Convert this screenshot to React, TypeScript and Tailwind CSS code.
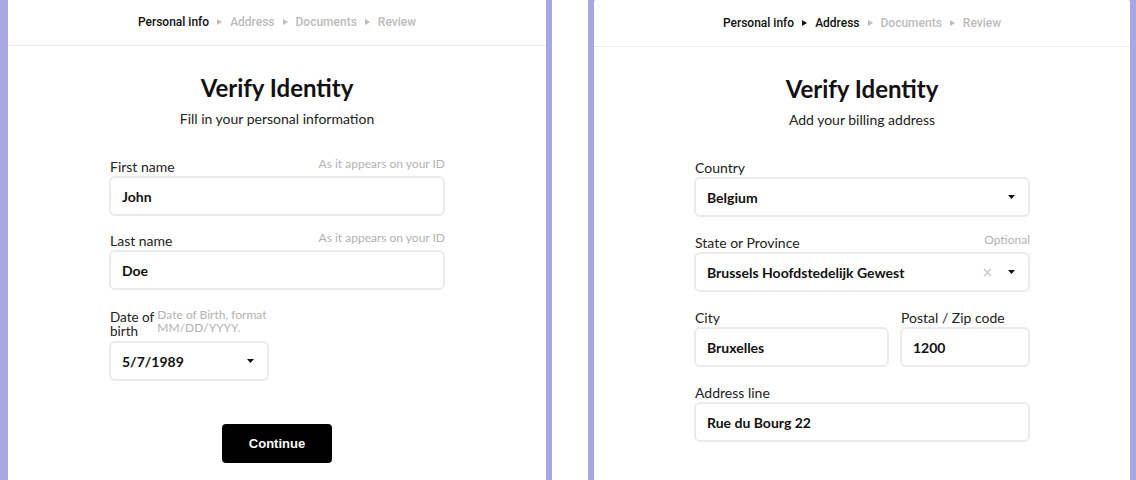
import React from "react";

const body = { fontFamily: "Lato, 'Noto Sans', sans-serif" };

function Caret() {
  return (
    <svg width="7" height="4" viewBox="0 0 7 4" className="shrink-0">
      <path d="M0 0h7L3.5 4z" fill="#111" />
    </svg>
  );
}

function Cross() {
  return (
    <svg width="9" height="9" viewBox="0 0 9 9" className="shrink-0 mr-[16px]">
      <path d="M1 1l7 7M8 1L1 8" stroke="#c6c6c6" strokeWidth="1.4" />
    </svg>
  );
}

function Sep({ dark }: { dark?: boolean }) {
  return (
    <svg width="5" height="6" viewBox="0 0 5 6" className="mx-[8px]">
      <path d="M0 0l5 3-5 3z" fill={dark ? "#111" : "#bdbdbd"} />
    </svg>
  );
}

function Steps({ active }: { active: number }) {
  const names = ["Personal info", "Address", "Documents", "Review"];
  return (
    <div
      className="h-[50px] border-b border-[#ececec] flex items-center justify-center pt-[3px] text-[12px] font-medium"
      style={{ fontFamily: "Roboto, sans-serif" }}
    >
      {names.map((n, i) => (
        <React.Fragment key={n}>
          {i > 0 && <Sep dark={i <= active} />}
          <span className={i <= active ? "text-[#111]" : "text-[#bcbcbc]"}>{n}</span>
        </React.Fragment>
      ))}
    </div>
  );
}

function Label({ text, hint }: { text: string; hint?: string }) {
  return (
    <div className="flex justify-between items-start h-[18px]">
      <span className="text-[14px] leading-[16px] text-[#222] pl-[1px] pt-[1px]">{text}</span>
      {hint && <span className="text-[12px] leading-[12px] text-[#b3b3b3]">{hint}</span>}
    </div>
  );
}

function Box({ value, caret, clear }: { value: string; caret?: boolean; clear?: boolean }) {
  return (
    <div className="h-[40px] border-2 border-[#ebebeb] rounded-md flex items-center pl-[11px] pr-[13px] bg-white">
      <span className="text-[14px] font-bold text-[#111] flex-1">{value}</span>
      {clear && <Cross />}
      {caret && <Caret />}
    </div>
  );
}

function Heading({ sub }: { sub: string }) {
  return (
    <div className="flex flex-col items-center pt-[28px]">
      <h1 className="text-[24px] leading-[28px] font-bold text-[#111]">Verify Identity</h1>
      <p className="text-[14px] leading-[18px] text-[#222] mt-[8px]">{sub}</p>
    </div>
  );
}

function Personal() {
  return (
    <div className="bg-[#a8a7e4] w-[552px] pl-2 pr-[6px] shrink-0">
      <div className="bg-white h-[490px] -mt-[4px] rounded-t-md" style={body}>
        <Steps active={0} />
        <Heading sub="Fill in your personal information" />
        <div className="w-[336px] mx-auto mt-[30px] flex flex-col gap-[16px]">
          <div>
            <Label text="First name" hint="As it appears on your ID" />
            <Box value="John" />
          </div>
          <div>
            <Label text="Last name" hint="As it appears on your ID" />
            <Box value="Doe" />
          </div>
          <div className="w-[160px] mt-[3px]">
            <div className="flex items-start gap-[3px] h-[32px] pl-[1px]">
              <span className="text-[13.5px] leading-[14px] text-[#222] shrink-0 whitespace-nowrap pt-[1px]">
                Date of
                <br />
                birth
              </span>
              <span className="text-[12px] leading-[13px] text-[#b3b3b3] -mt-[1px]">
                Date of Birth, format MM/DD/YYYY.
              </span>
            </div>
            <Box value="5/7/1989" caret />
          </div>
        </div>
        <div className="flex justify-center mt-[43px]">
          <button
            className="w-[110px] h-[39px] bg-black text-white rounded text-[13px] font-bold"
            style={{ fontFamily: "'Liberation Sans', Arial, sans-serif" }}
          >
            Continue
          </button>
        </div>
      </div>
    </div>
  );
}

function Address() {
  return (
    <div className="bg-[#a8a7e4] w-[548px] pl-[6px] pr-[6px] shrink-0">
      <div className="bg-white h-[490px] -mt-[3px] rounded-t-md" style={body}>
        <Steps active={1} />
        <Heading sub="Add your billing address" />
        <div className="w-[336px] mx-auto mt-[30px] flex flex-col gap-[17px]">
          <div>
            <Label text="Country" />
            <Box value="Belgium" caret />
          </div>
          <div>
            <Label text="State or Province" hint="Optional" />
            <Box value="Brussels Hoofdstedelijk Gewest" caret clear />
          </div>
          <div className="flex gap-[11px]">
            <div className="w-[195px]">
              <Label text="City" />
              <Box value="Bruxelles" />
            </div>
            <div className="flex-1">
              <Label text="Postal / Zip code" />
              <Box value="1200" />
            </div>
          </div>
          <div>
            <Label text="Address line" />
            <Box value="Rue du Bourg 22" />
          </div>
        </div>
      </div>
    </div>
  );
}

export default function App() {
  return (
    <div className="w-[1136px] h-[480px] bg-white flex gap-[36px] overflow-hidden">
      <Personal />
      <Address />
    </div>
  );
}
